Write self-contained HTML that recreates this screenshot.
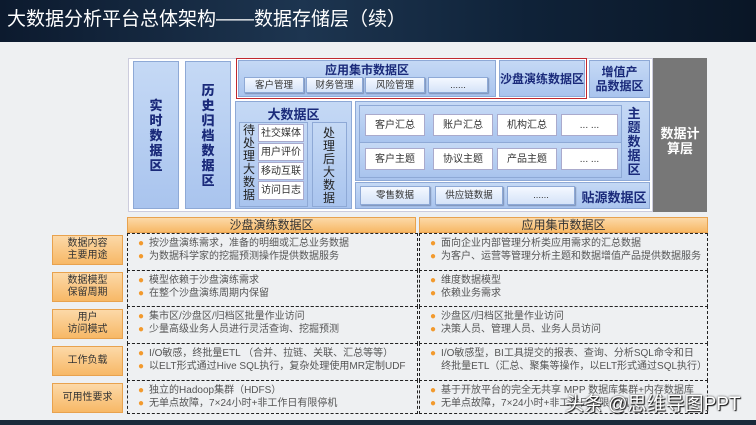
<!DOCTYPE html><html><head><meta charset="utf-8"><style>
*{margin:0;padding:0;box-sizing:border-box}
body{width:756px;height:425px;overflow:hidden;background:#eef0f2;font-family:"Liberation Sans","Noto Sans CJK SC",sans-serif;position:relative}
.a{position:absolute}
.hd{left:0;top:0;width:756px;height:42px;background:linear-gradient(90deg,#0c1a2e,#1d3550 40%,#0f2238 70%,#0a1626);color:#fff;font-size:19px;line-height:40px;padding-left:7px}
.bl{background:linear-gradient(#c5d9f5,#a9c4ee);border:1px solid #8ea9d6}
.vt{font-weight:bold;color:#1a2a7a;font-size:13px;display:flex;align-items:center;justify-content:center}
.vt b{display:block;width:14px;line-height:15px;text-align:center}
.chip{background:linear-gradient(#f4f8ff,#d5e3f8);border:1px solid #8ea9d6;font-size:9.5px;color:#333;text-align:center;box-shadow:1px 1px 1px #7a8fb5}
.wc{background:#fff;border:1px solid #aac;font-size:10px;color:#333;text-align:center}
.t{font-weight:bold;color:#1a2a7a;font-size:12px;text-align:center}
.or{background:linear-gradient(#fcd9a8,#f7b866);border:1px solid #e8a24e;color:#333;font-size:10px;text-align:center;display:flex;align-items:center;justify-content:center;line-height:12px}
.dc{border:1px dashed #222;font-size:10px;color:#555;padding:3px 0 0 10px;line-height:13px}
.dc span{color:#f29a2e;margin-right:5px}
</style></head><body>
<div class="a hd">大数据分析平台总体架构——数据存储层（续）</div>
<div class="a" style="left:128px;top:58px;width:525px;height:154px;background:#fff;border:1px solid #ccd"></div>
<div class="a" style="left:653px;top:58px;width:54px;height:154px;background:#777;color:#fff;font-weight:bold;font-size:13px;text-align:center;padding-top:68px;line-height:15px">数据计<br>算层</div>
<div class="a bl vt" style="left:133px;top:61px;width:46px;height:148px"><b>实时数据区</b></div>
<div class="a bl vt" style="left:185px;top:61px;width:46px;height:148px"><b>历史归档数据区</b></div>
<div class="a" style="left:236px;top:58px;width:351px;height:41px;border:1px solid #c0282e"></div>
<div class="a bl" style="left:238px;top:60px;width:258px;height:37px"></div>
<div class="a t" style="left:238px;top:61px;width:258px">应用集市数据区</div>
<div class="a chip" style="left:244px;top:77px;width:60px;height:16px;line-height:15px">客户管理</div>
<div class="a chip" style="left:306px;top:77px;width:57px;height:16px;line-height:15px">财务管理</div>
<div class="a chip" style="left:365px;top:77px;width:60px;height:16px;line-height:15px">风险管理</div>
<div class="a chip" style="left:428px;top:77px;width:60px;height:16px;line-height:15px">......</div>
<div class="a bl t" style="left:499px;top:60px;width:86px;height:37px;line-height:36px">沙盘演练数据区</div>
<div class="a bl t" style="left:589px;top:60px;width:61px;height:38px;line-height:14px;padding-top:4px">增值产<br>品数据区</div>
<div class="a bl" style="left:235px;top:101px;width:117px;height:108px"></div>
<div class="a t" style="left:235px;top:104px;width:117px;font-size:13px">大数据区</div>
<div class="a bl" style="left:239px;top:122px;width:69px;height:85px"></div>
<div class="a" style="left:242px;top:124px;width:14px;font-size:12px;color:#222;line-height:13px;text-align:center">待处理大数据</div>
<div class="a wc" style="left:258px;top:124px;width:46px;height:18px;line-height:17px">社交媒体</div>
<div class="a wc" style="left:258px;top:143px;width:46px;height:18px;line-height:17px">用户评价</div>
<div class="a wc" style="left:258px;top:162px;width:46px;height:18px;line-height:17px">移动互联</div>
<div class="a wc" style="left:258px;top:181px;width:46px;height:19px;line-height:18px">访问日志</div>
<div class="a bl" style="left:312px;top:122px;width:35px;height:85px"></div>
<div class="a" style="left:322px;top:127px;width:14px;font-size:12px;color:#222;line-height:13px;text-align:center">处理后大数据</div>
<div class="a bl" style="left:355px;top:101px;width:295px;height:80px"></div>
<div class="a bl" style="left:359px;top:105px;width:263px;height:38px"></div>
<div class="a bl" style="left:359px;top:142px;width:263px;height:36px"></div>
<div class="a wc" style="left:365px;top:114px;width:60px;height:22px;line-height:21px">客户汇总</div>
<div class="a wc" style="left:433px;top:114px;width:60px;height:22px;line-height:21px">账户汇总</div>
<div class="a wc" style="left:497px;top:114px;width:60px;height:22px;line-height:21px">机构汇总</div>
<div class="a wc" style="left:561px;top:114px;width:57px;height:22px;line-height:21px">... ...</div>
<div class="a wc" style="left:365px;top:148px;width:60px;height:22px;line-height:21px">客户主题</div>
<div class="a wc" style="left:433px;top:148px;width:60px;height:22px;line-height:21px">协议主题</div>
<div class="a wc" style="left:497px;top:148px;width:60px;height:22px;line-height:21px">产品主题</div>
<div class="a wc" style="left:561px;top:148px;width:57px;height:22px;line-height:21px">... ...</div>
<div class="a t" style="left:626px;top:107px;width:16px;line-height:14px;font-size:13px">主题数据区</div>
<div class="a bl" style="left:355px;top:182px;width:295px;height:27px"></div>
<div class="a chip" style="left:360px;top:186px;width:70px;height:19px;line-height:18px">零售数据</div>
<div class="a chip" style="left:435px;top:186px;width:68px;height:19px;line-height:18px">供应链数据</div>
<div class="a chip" style="left:507px;top:186px;width:68px;height:19px;line-height:18px">......</div>
<div class="a t" style="left:580px;top:187px;width:68px;font-size:13px">贴源数据区</div>
<div class="a or" style="left:127px;top:217px;width:289px;height:16px;font-size:12px">沙盘演练数据区</div>
<div class="a or" style="left:419px;top:217px;width:289px;height:16px;font-size:12px">应用集市数据区</div>
<div class="a or" style="left:52px;top:235px;width:71px;height:30px">数据内容<br>主要用途</div>
<div class="a or" style="left:52px;top:272px;width:71px;height:30px">数据模型<br>保留周期</div>
<div class="a or" style="left:52px;top:309px;width:71px;height:30px">用户<br>访问模式</div>
<div class="a or" style="left:52px;top:346px;width:71px;height:30px">工作负载</div>
<div class="a or" style="left:52px;top:383px;width:71px;height:30px">可用性要求</div>
<div class="a dc" style="left:127px;top:233px;width:291px;height:38px"><span>●</span>按沙盘演练需求，准备的明细或汇总业务数据<br><span>●</span>为数据科学家的挖掘预测操作提供数据服务</div>
<div class="a dc" style="left:127px;top:270px;width:291px;height:37px"><span>●</span>模型依赖于沙盘演练需求<br><span>●</span>在整个沙盘演练周期内保留</div>
<div class="a dc" style="left:127px;top:306px;width:291px;height:38px"><span>●</span>集市区/沙盘区/归档区批量作业访问<br><span>●</span>少量高级业务人员进行灵活查询、挖掘预测</div>
<div class="a dc" style="left:127px;top:343px;width:291px;height:38px"><span>●</span>I/O敏感，终批量ETL （合并、拉链、关联、汇总等等）<br><span>●</span>以ELT形式通过Hive SQL执行，复杂处理使用MR定制UDF</div>
<div class="a dc" style="left:127px;top:380px;width:291px;height:34px"><span>●</span>独立的Hadoop集群（HDFS）<br><span>●</span>无单点故障，7×24小时+非工作日有限停机</div>
<div class="a dc" style="left:419px;top:233px;width:289px;height:38px"><span>●</span>面向企业内部管理分析类应用需求的汇总数据<br><span>●</span>为客户、运营等管理分析主题和数据增值产品提供数据服务</div>
<div class="a dc" style="left:419px;top:270px;width:289px;height:37px"><span>●</span>维度数据模型<br><span>●</span>依赖业务需求</div>
<div class="a dc" style="left:419px;top:306px;width:289px;height:38px"><span>●</span>沙盘区/归档区批量作业访问<br><span>●</span>决策人员、管理人员、业务人员访问</div>
<div class="a dc" style="left:419px;top:343px;width:289px;height:38px"><span>●</span>I/O敏感型，BI工具提交的报表、查询、分析SQL命令和日<br>&nbsp;&nbsp;&nbsp;&nbsp;终批量ETL（汇总、聚集等操作，以ELT形式通过SQL执行）</div>
<div class="a dc" style="left:419px;top:380px;width:289px;height:34px"><span>●</span>基于开放平台的完全无共享 MPP 数据库集群+内存数据库<br><span>●</span>无单点故障，7×24小时+非工作日有限停机</div>
<div class="a" style="left:565px;top:389px;font-size:19px;color:#fff;text-shadow:0 0 2px #333,1px 1px 1px #000">头条 @思维导图PPT</div>
<div class="a" style="left:0;top:420px;width:756px;height:5px;background:#1a2a3a"></div>
</body></html>
